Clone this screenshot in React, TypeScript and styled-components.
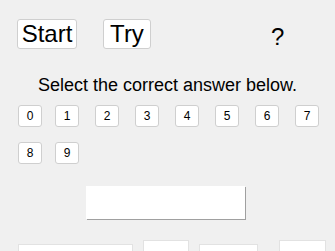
import styled, { createGlobalStyle } from 'styled-components';

const GlobalStyle = createGlobalStyle`
  html, body {
    margin: 0;
    padding: 0;
    background: #f0f0f0;
    font-family: "Liberation Sans", Arial, sans-serif;
    color: #000;
  }
`;

const digits = ['0', '1', '2', '3', '4', '5', '6', '7', '8', '9'];

const App = () => {
  return (
    <>
      <GlobalStyle />
      <Page>
        <TopBar>
          <BigButton $width={60}>Start</BigButton>
          <BigButton $width={48}>Try</BigButton>
          <Help>?</Help>
        </TopBar>
        <Prompt>Select the correct answer below.</Prompt>
        <DigitGrid>
          {digits.map((d) => (
            <DigitButton key={d}>{d}</DigitButton>
          ))}
        </DigitGrid>
        <AnswerBox />
        <BottomRow>
          <Tile $width={115} $offset={4} />
          <Tile $width={46} $offset={0} />
          <Tile $width={59} $offset={4} />
          <Tile $width={47} $offset={0} $gap={21} />
        </BottomRow>
      </Page>
    </>
  );
};

export default App;

const Page = styled.div`
  width: 335px;
  height: 251px;
  overflow: hidden;
`;

const TopBar = styled.div`
  display: flex;
  align-items: flex-start;
  gap: 26px;
  padding: 19px 0 0 17px;
`;

const BigButton = styled.button<{ $width: number }>`
  width: ${(p) => p.$width}px;
  height: 30px;
  padding: 0;
  background: #fff;
  border: 1px solid #cfcfcf;
  border-radius: 3px;
  font-family: inherit;
  font-size: 24px;
  color: #000;
`;

const Help = styled.span`
  margin-left: 94px;
  margin-top: 4px;
  font-size: 24px;
  line-height: 28px;
`;

const Prompt = styled.div`
  margin-top: 23px;
  text-align: center;
  font-size: 18px;
  line-height: 22px;
`;

const DigitGrid = styled.div`
  display: grid;
  grid-template-columns: repeat(8, 40px);
  row-gap: 15px;
  margin-top: 9px;
  padding-left: 15px;
`;

const DigitButton = styled.button`
  width: 24px;
  height: 22px;
  padding: 0;
  background: #fff;
  border: 1px solid #cfcfcf;
  border-radius: 3px;
  font-family: inherit;
  font-size: 12px;
  color: #000;

  &:nth-child(8n + 1) {
    margin-left: 3px;
  }
`;

const AnswerBox = styled.div`
  width: 159px;
  height: 33px;
  margin: 22px 0 0 86px;
  background: #fff;
  box-shadow: 1px 1px 0 #a0a0a0;
`;

const BottomRow = styled.div`
  display: flex;
  align-items: flex-start;
  gap: 10px;
  margin-top: 21px;
  padding-left: 18px;
`;

const Tile = styled.div<{ $width: number; $offset: number; $gap?: number }>`
  width: ${(p) => p.$width}px;
  height: 30px;
  margin-top: ${(p) => p.$offset}px;
  margin-left: ${(p) => (p.$gap ? p.$gap - 10 : 0)}px;
  background: #fff;
  border: 1px solid #e2e2e2;
  box-sizing: border-box;
`;
